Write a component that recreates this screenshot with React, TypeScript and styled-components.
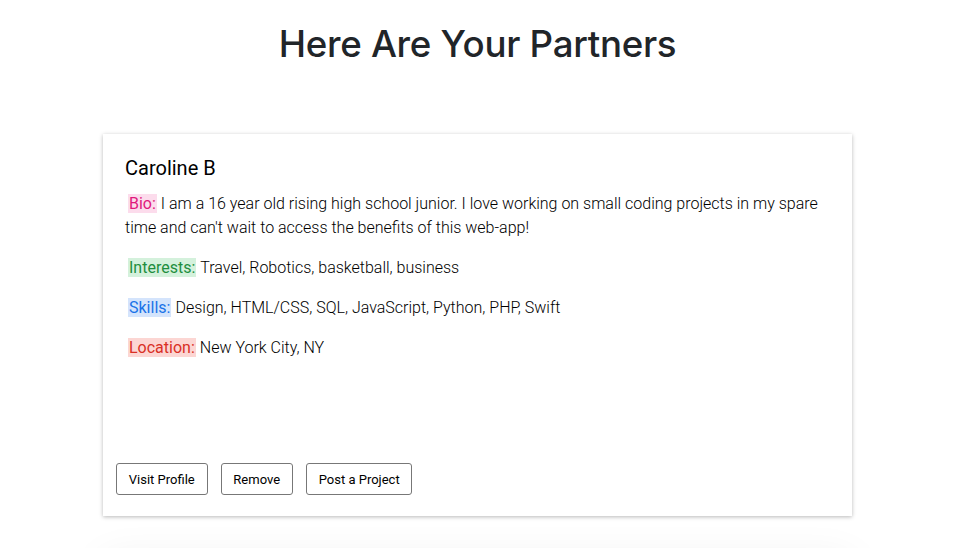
import React from "react";
import styled, { createGlobalStyle } from "styled-components";

const Global = createGlobalStyle`
  html, body { margin: 0; padding: 0; background: #fff; }
  body { font-family: Roboto, "Liberation Sans", sans-serif; color: #212529; }
`;

const Page = styled.div`
  width: 955px;
  display: flex;
  flex-direction: column;
  align-items: center;
  overflow: hidden;
  height: 548px;
`;

const Title = styled.h1`
  font-family: Inter, "Liberation Sans", sans-serif;
  font-weight: 500;
  font-size: 36.7px;
  line-height: 46px;
  letter-spacing: -0.3px;
  color: #212529;
  margin: 21px 0 0;
`;

const List = styled.div`
  margin-top: 67px;
  display: flex;
  flex-direction: column;
  gap: 44px;
`;

const Card = styled.div<{ $ghost?: boolean }>`
  width: 749px;
  height: 382px;
  box-sizing: border-box;
  background: #fff;
  box-shadow: ${(p) =>
    p.$ghost ? "0 0 40px rgba(0,0,0,0.07)" : "0 1px 4px rgba(0,0,0,0.28)"};
  display: flex;
  flex-direction: column;
`;

const Body = styled.div`
  padding: 22px 22px 0 22px;
  flex: 1;
`;

const Name = styled.h2`
  font-family: Roboto, sans-serif;
  font-weight: 400;
  font-size: 20px;
  line-height: 24px;
  color: #000;
  margin: 0 0 12px;
`;

const Para = styled.p`
  font-family: Roboto, sans-serif;
  font-weight: 300;
  font-size: 16px;
  line-height: 24px;
  color: #000;
  margin: 0 0 16px;
`;

const Label = styled.span<{ $fg: string; $bg: string }>`
  font-weight: 400;
  color: ${(p) => p.$fg};
  background: ${(p) => p.$bg};
  padding: 0 1px;
  margin-left: 3px;
  margin-right: 4px;
`;

const Footer = styled.div`
  display: flex;
  gap: 13px;
  padding: 0 13px 21px;
`;

const Button = styled.button`
  font-family: Roboto, sans-serif;
  font-size: 13px;
  font-weight: 400;
  color: #000;
  background: #fff;
  border: 1px solid #777;
  border-radius: 3px;
  height: 32px;
  padding: 0 11.8px;
`;

export default function App() {
  return (
    <>
      <Global />
      <Page>
        <Title>Here Are Your Partners</Title>
        <List>
          <Card>
            <Body>
              <Name>Caroline B</Name>
              <Para>
                <Label $fg="#e0197d" $bg="#fcdcec">Bio:</Label>I am a 16 year old rising high
                school junior. I love working on small coding projects in my spare time and
                can't wait to access the benefits of this web-app!
              </Para>
              <Para>
                <Label $fg="#1e8e3e" $bg="#d4f1dc">Interests:</Label>Travel, Robotics, basketball,
                business
              </Para>
              <Para>
                <Label $fg="#1a73e8" $bg="#d4e4fc">Skills:</Label>Design, HTML/CSS, SQL,
                JavaScript, Python, PHP, Swift
              </Para>
              <Para>
                <Label $fg="#d93025" $bg="#fcd6d3">Location:</Label>New York City, NY
              </Para>
            </Body>
            <Footer>
              <Button>Visit Profile</Button>
              <Button>Remove</Button>
              <Button>Post a Project</Button>
            </Footer>
          </Card>
          <Card $ghost />
        </List>
      </Page>
    </>
  );
}
